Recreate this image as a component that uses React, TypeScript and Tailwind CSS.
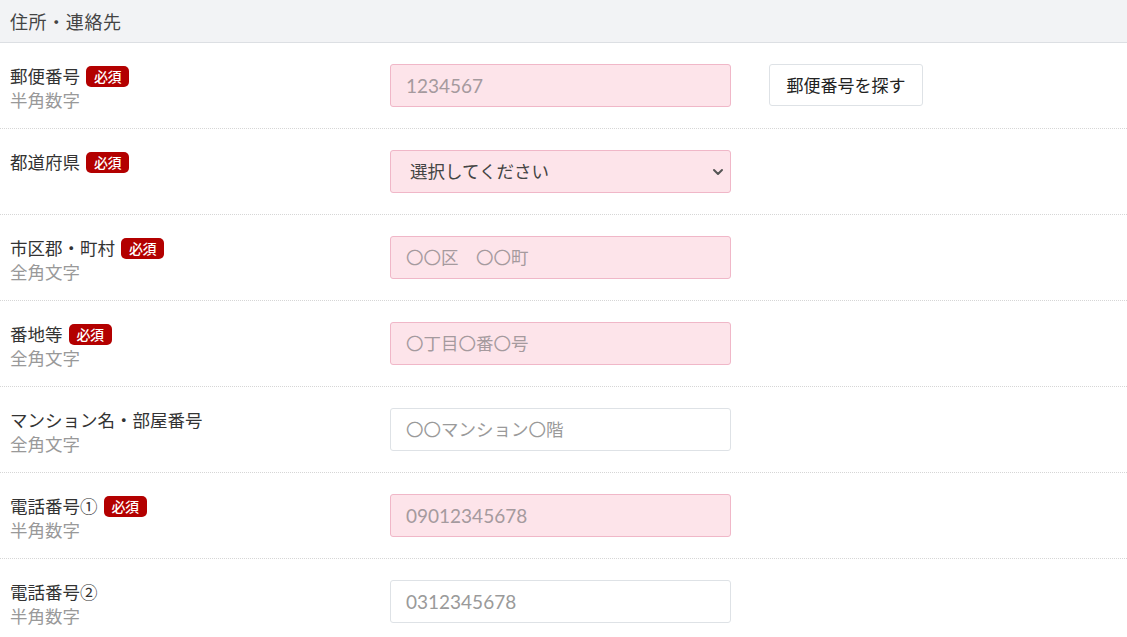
import { ChevronDown } from "lucide-react";

type Row = {
  label: string;
  sub?: string;
  required?: boolean;
  placeholder?: string;
  numeric?: boolean;
  select?: boolean;
  button?: string;
};

const rows: Row[] = [
  { label: "郵便番号", sub: "半角数字", required: true, placeholder: "1234567", numeric: true, button: "郵便番号を探す" },
  { label: "都道府県", required: true, select: true },
  { label: "市区郡・町村", sub: "全角文字", required: true, placeholder: "〇〇区　〇〇町" },
  { label: "番地等", sub: "全角文字", required: true, placeholder: "〇丁目〇番〇号" },
  { label: "マンション名・部屋番号", sub: "全角文字", placeholder: "〇〇マンション〇階" },
  { label: "電話番号①", sub: "半角数字", required: true, placeholder: "09012345678", numeric: true },
  { label: "電話番号②", sub: "半角数字", placeholder: "0312345678", numeric: true },
];

function Badge() {
  return (
    <span className="ml-[6px] inline-flex h-[21px] items-center rounded-[5px] bg-[#b30000] px-[8px] text-[14px] font-medium leading-none tracking-[-0.5px] text-white">
      必須
    </span>
  );
}

export default function App() {
  return (
    <div className="min-h-[637px] bg-white font-['Noto_Sans_CJK_JP','Noto_Sans',sans-serif] text-[#333]">
      <div className="flex h-[43px] items-center border-b border-[#dcdfe3] bg-[#f2f3f5] pl-[10px] text-[18px] tracking-[0.6px] text-[#444]">
        住所・連絡先
      </div>
      {rows.map((r) => (
        <div
          key={r.label}
          className="flex h-[86px] items-start border-b border-dotted border-[#d6d6d6] pt-[21px]"
        >
          <div className="w-[390px] pl-[10px]">
            <div className="flex h-[24px] items-center text-[17.5px] leading-[24px]">
              {r.label}
              {r.required && <Badge />}
            </div>
            {r.sub && <div className="text-[17.5px] leading-[24px] text-[#999]">{r.sub}</div>}
          </div>
          {r.select ? (
            <div className="flex h-[43px] w-[341px] items-center justify-between rounded-[3px] border border-[#f0b7c8] bg-[#fde4ea] pl-[19px] pr-[4px] text-[17.5px] text-[#444]">
              <span>選択してください</span>
              <ChevronDown size={16} strokeWidth={3} className="text-[#555]" />
            </div>
          ) : (
            <input
              readOnly
              placeholder={r.placeholder}
              className={
                (r.required
                  ? "h-[43px] w-[341px] rounded-[3px] border border-[#f0b7c8] bg-[#fde4ea] px-[15px] font-['Lato','Noto_Sans_CJK_JP',sans-serif] outline-none placeholder:text-[#a59a9e] "
                  : "h-[43px] w-[341px] rounded-[3px] border border-[#dee2e6] bg-white px-[15px] font-['Lato','Noto_Sans_CJK_JP',sans-serif] outline-none placeholder:text-[#9a9a9a] ") +
                (r.numeric ? "text-[19px]" : "text-[17.5px]")
              }
            />
          )}
          {r.button && (
            <button
              type="button"
              className="ml-[38px] h-[42px] w-[154px] rounded-[3px] border border-[#dee2e6] bg-white text-[17px] text-[#222]"
            >
              {r.button}
            </button>
          )}
        </div>
      ))}
    </div>
  );
}
